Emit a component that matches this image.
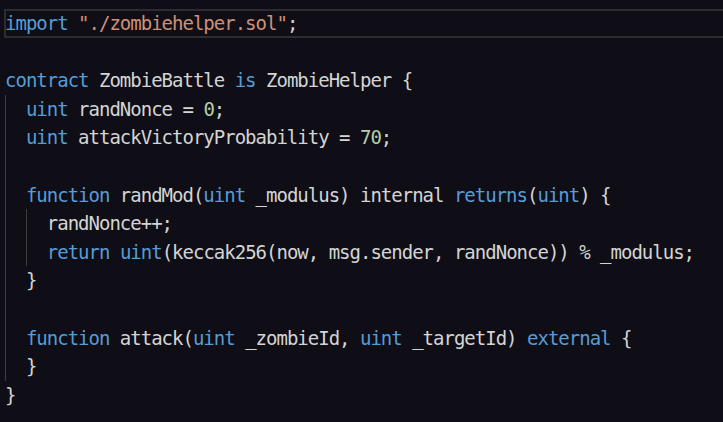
import React from 'react';

// --- token colours (VS Code dark-ish palette) ---
const K = ({ children }) => <span className="text-[#569cd6]">{children}</span>;
const S = ({ children }) => <span className="text-[#ce9178]">{children}</span>;
const N = ({ children }) => <span className="text-[#b5cea8]">{children}</span>;

// one editor row, fixed height so the rows line up with the reference
const Line = ({ children, className = '' }) => (
  <div className={`h-[28.6px] leading-[28.6px] whitespace-pre ${className}`}>{children}</div>
);

export default function App() {
  return (
    <div className="w-[723px] h-[422px] overflow-hidden bg-[#0f0e16] text-[#d4d4d4] pt-[9px] pl-[5px] font-['DejaVu_Sans_Mono',monospace] text-[19px] tracking-[-1px]">
      {/* current line highlight */}
      <Line className="-ml-[1px] pl-[1px] w-[730px] shadow-[inset_0_0_0_2px_#2d2c33]">
        <K>import</K> <S>"./zombiehelper.sol"</S>;
      </Line>
      <Line />
      <Line>
        <K>contract</K> ZombieBattle <K>is</K> ZombieHelper {'{'}
      </Line>

      {/* contract body, guide on column 0 */}
      <div className="shadow-[inset_1px_0_0_#3c3c42]">
        <Line>
          {'  '}<K>uint</K> randNonce = <N>0</N>;
        </Line>
        <Line>
          {'  '}<K>uint</K> attackVictoryProbability = <N>70</N>;
        </Line>
        <Line />
        <Line>
          {'  '}<K>function</K> randMod(<K>uint</K> _modulus) internal <K>returns</K>(<K>uint</K>) {'{'}
        </Line>
        <div className="ml-[20.9px] shadow-[inset_1px_0_0_#3c3c42]">
          <Line>
            {'  '}randNonce++;
          </Line>
          <Line>
            {'  '}<K>return</K> <K>uint</K>(keccak256(now, msg.sender, randNonce)) % _modulus;
          </Line>
        </div>
        <Line>{'  }'}</Line>
        <Line />
        <Line>
          {'  '}<K>function</K> attack(<K>uint</K> _zombieId, <K>uint</K> _targetId) <K>external</K> {'{'}
        </Line>
        <Line>{'  }'}</Line>
      </div>
      <Line>{'}'}</Line>
    </div>
  );
}
